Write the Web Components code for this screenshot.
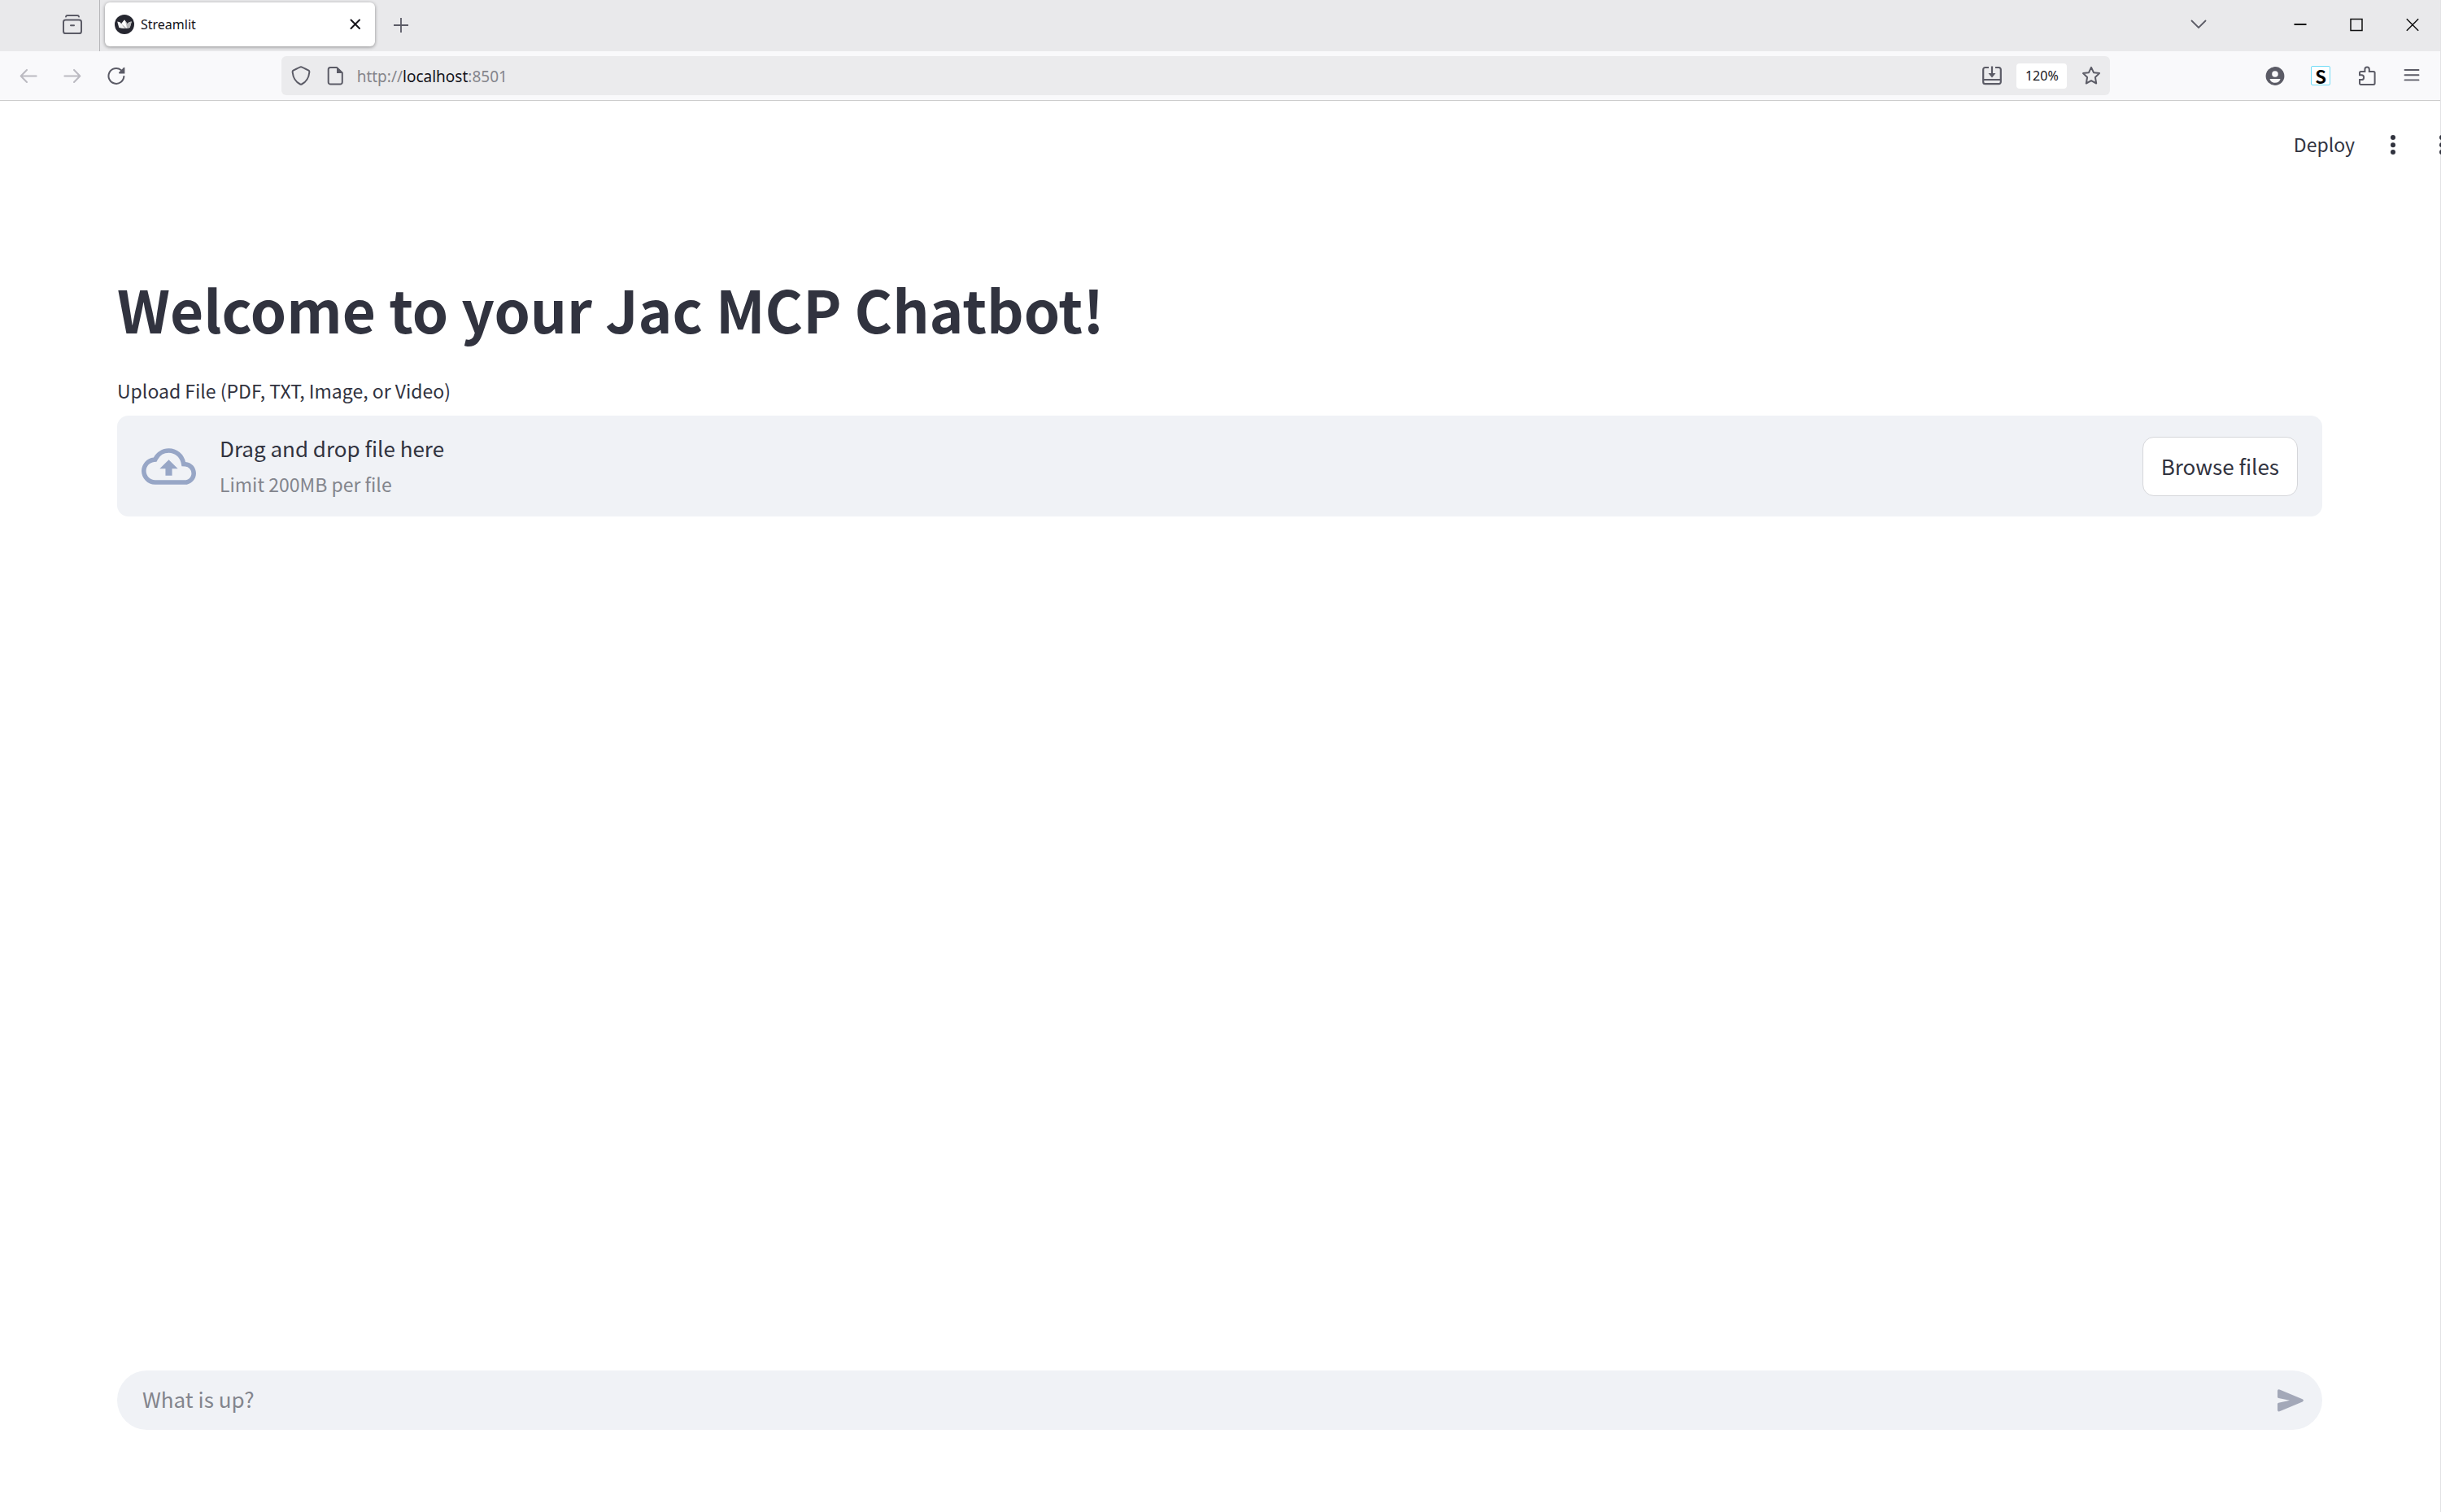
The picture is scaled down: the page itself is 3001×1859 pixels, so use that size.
<!DOCTYPE html>
<html lang="en">
<head>
<meta charset="utf-8">
<title>Streamlit</title>
<style>
html, body { margin: 0; height: 100%; background: #fff; }
body { --ui: "Noto Sans", "Open Sans", sans-serif; --app: "Noto Sans CJK JP", "Noto Sans", sans-serif; --ink: #31333f; --muted: #83858d; --panel: #f0f2f6; }
</style>
</head>
<body>
<browser-window>
  <tab-strip slot="chrome"><browser-tab>Streamlit</browser-tab></tab-strip>
  <nav-toolbar slot="chrome"></nav-toolbar>
  <app-header></app-header>
  <app-main>
    <app-title>Welcome to your Jac MCP Chatbot!</app-title>
    <file-uploader></file-uploader>
    <chat-input slot="bottom"></chat-input>
  </app-main>
</browser-window>
<script>
const define = (name, css, html) => customElements.define(name, class extends HTMLElement {
  constructor() {
    super();
    this.attachShadow({ mode: 'open' }).innerHTML = `<style>
      * { box-sizing: border-box; }
      button, a { font: inherit; color: inherit; background: none; border: 0; padding: 0; margin: 0; text-decoration: none; }
      svg { display: block; }
      ${css}</style>${html}`;
  }
});

const icons = {
  view: ['0 0 24 24', '<g fill="none" stroke="#5b5b66" stroke-width="2" stroke-linecap="round"><path d="M4 2.600Q4.300 1 5.800 1H18.200Q19.700 1 20 2.600"/><rect x="1" y="6.500" width="22" height="16.500" rx="2.600"/><path d="M10 13.200h4"/></g>'],
  cross: ['0 0 24 24', '<path d="M6.500 6.500l10.500 10.500M17 6.500l-10.500 10.500" stroke="#15141a" stroke-width="2" stroke-linecap="round"/>'],
  plus: ['0 0 24 24', '<path d="M12 4v18M3 13h18" stroke="#5b5b66" stroke-width="1.800"/>'],
  chevron: ['0 0 24 24', '<path d="M3.500 7.500l8.500 8.500L20.500 7.500" fill="none" stroke="#5b5b66" stroke-width="1.800" stroke-linecap="round"/>'],
  min: ['0 0 24 24', '<path d="M4.500 12h15" stroke="#111" stroke-width="2"/>'],
  max: ['0 0 24 24', '<rect x="5" y="5.500" width="14" height="14" fill="none" stroke="#111" stroke-width="1.500"/>'],
  close: ['0 0 24 24', '<path d="M4.800 5.300l14.400 14.400M19.200 5.300L4.800 19.700" stroke="#111" stroke-width="1.500"/>'],
  back: ['0 0 24 24', '<path d="M22.500 12.500H2.500M9.800 4.300L1.800 12.500l8 8.200" fill="none" stroke="#bbbac1" stroke-width="2.200" stroke-linecap="round" stroke-linejoin="round"/>'],
  forward: ['0 0 24 24', '<path d="M1.500 12.500h20M14.200 4.300l8 8.200-8 8.200" fill="none" stroke="#bbbac1" stroke-width="2.200" stroke-linecap="round" stroke-linejoin="round"/>'],
  reload: ['0 0 24 24', '<path d="M22.200 13A10.300 10.300 0 1 1 18.200 4.300" fill="none" stroke="#5b5b66" stroke-width="2.200" stroke-linecap="round"/><path d="M23.300 1v8.200h-7.400q-1-.400-.500-1.500L21.800 1.300q.900-.600 1.500-.300z" fill="#5b5b66"/>'],
  shield: ['0 0 24 24', '<path d="M12 1.200Q13 1.200 21.500 5.600Q22.600 6.200 22.300 8C21.600 15 18 20 13 22.500Q12 23 11 22.500C6 20 2.400 15 1.700 8Q1.400 6.200 2.500 5.600Q11 1.200 12 1.200z" fill="none" stroke="#5b5b66" stroke-width="2"/>'],
  page: ['0 0 24 24', '<path d="M6 2h8l6.800 6.500V20a2.600 2.600 0 0 1-2.600 2.600H6.300A2.600 2.600 0 0 1 3.700 20V4.400A2.400 2.400 0 0 1 6 2z" fill="none" stroke="#5b5b66" stroke-width="2" stroke-linejoin="round"/><path d="M14 1.500v7.500h7.500z" fill="#5b5b66"/>'],
  install: ['0 0 24 24', '<path d="M8 2H3.600A2.400 2.400 0 0 0 1.200 4.400V19.800a2.400 2.400 0 0 0 2.400 2.400H20.400a2.400 2.400 0 0 0 2.400-2.400V4.400A2.400 2.400 0 0 0 20.400 2H16M1.200 17h21.600M12 .500V11" fill="none" stroke="#5b5b66" stroke-width="2.200"/><path d="M7.500 9h9L12 14.500z" fill="#5b5b66"/>'],
  star: ['0 0 24 24', '<path d="M12 1.800l3 6.400 7 .900-5.100 4.900 1.300 7.500-6.200-3.400-6.200 3.400 1.300-7.500L2 9.100l7-.900z" fill="none" stroke="#5b5b66" stroke-width="2" stroke-linejoin="round"/>'],
  account: ['0 0 24 24', '<circle cx="12" cy="12.500" r="11.400" fill="#5b5b66"/><circle cx="12" cy="10" r="3.800" fill="#f9f9fb"/><path d="M5.500 16H18.500C18 19 15.500 20.800 12 20.800S6 19 5.500 16z" fill="#f9f9fb"/>'],
  puzzle: ['0 0 24 24', '<path d="M5 22.900H21a1.600 1.600 0 0 0 1.600-1.600V8.600A1.600 1.600 0 0 0 21 7H15.800V4.200a2.700 2.700 0 0 0-5.400 0V7H5.600A1.600 1.600 0 0 0 4 8.600v2.700H6.200a2.900 2.900 0 0 1 0 5.800H4V21.500a1.400 1.400 0 0 0 1 1.400z" fill="none" stroke="#5b5b66" stroke-width="2"/>'],
  menu: ['0 0 24 24', '<path d="M3.500 5h17M3.500 11.200h17M3.500 17.400h17" stroke="#5b5b66" stroke-width="1.900" stroke-linecap="round"/>'],
  crown: ['0 0 24 24', '<circle cx="12" cy="12" r="12" fill="#262730"/><path d="M3.200 8.500Q7 8.800 8.300 11.200L12 6.500l3.700 4.700Q17 8.800 20.800 8.500L18.700 16Q12 18 5.300 16z" fill="#f2f2f2"/><path d="M12 6.500l3.700 4.700Q17 8.800 20.800 8.500L18.700 16Q15 17 12 17L8.300 11.200z" fill="#b8b8ba"/><path d="M12 6.500L8.300 11.200 15 16.800Q14 10 12 6.500z" fill="#fff"/>'],
  kebab: ['0 0 24 24', '<g fill="#31333f"><circle cx="12" cy="3" r="3"/><circle cx="12" cy="12.200" r="3"/><circle cx="12" cy="21" r="3"/></g>'],
  cloud: ['0 0 24 24', '<path fill="#97a6c6" d="M19.350 10.040A7.490 7.490 0 0 0 12 4C9.110 4 6.600 5.640 5.350 8.040A5.994 5.994 0 0 0 0 14c0 3.310 2.690 6 6 6h13c2.760 0 5-2.240 5-5 0-2.640-2.050-4.780-4.650-4.960zM19 18H6c-2.210 0-4-1.790-4-4 0-2.050 1.530-3.760 3.560-3.970l1.070-.110.500-.950A5.469 5.469 0 0 1 12 6c2.620 0 4.880 1.860 5.390 4.430l.300 1.500 1.530.110A2.980 2.980 0 0 1 22 15c0 1.650-1.350 3-3 3zM8 13h2.550v3h2.900v-3H16l-4-4z"/>'],
  send: ['0 0 32 28', '<path fill="#a3a8b8" d="M0 2Q0-.300 2.600.400L30.700 12.200Q33.200 13.800 30.700 15.500L2.600 27.300Q0 28 0 25.500V18.200Q0 17 1.300 16.700L15 13.800 1.300 11Q0 10.700 0 9.500z"/>']
};
customElements.define('ui-icon', class extends HTMLElement {
  connectedCallback() {
    const [box, body] = icons[this.getAttribute('name')];
    const root = this.shadowRoot || this.attachShadow({ mode: 'open' });
    root.innerHTML = `<style>:host{display:block;flex:none;width:24px;height:24px}svg{display:block;width:100%;height:100%}</style><svg viewBox="${box}" aria-hidden="true">${body}</svg>`;
  }
});

define('browser-window', `
  :host { display: flex; flex-direction: column; box-sizing: border-box; min-height: 100vh; border-right: 1px solid #e2e2e4; }
`, `<slot name="chrome"></slot><slot></slot>`);

define('tab-strip', `
  :host { display: flex; align-items: center; box-sizing: border-box; height: 63px; background: #e9e9eb; padding: 0 0 3px 65px; font: 16px var(--ui); }
  button { width: 48px; height: 48px; display: grid; place-items: center; }
  .divider { width: 1px; align-self: stretch; background: #b5b5b9; margin: 0 6px -3px 9px; }
  .new { margin-left: 8px; }
  .list { margin: 0 66px 0 auto; }
  .win { width: 69px; height: 60px; }
`, `<button aria-label="View recent browsing"><ui-icon name="view"></ui-icon></button>
  <span class="divider"></span><slot></slot>
  <button class="new" aria-label="New tab"><ui-icon name="plus"></ui-icon></button>
  <button class="list" aria-label="List all tabs"><ui-icon name="chevron"></ui-icon></button>
  <button class="win" aria-label="Minimize"><ui-icon name="min"></ui-icon></button>
  <button class="win" aria-label="Maximize"><ui-icon name="max"></ui-icon></button>
  <button class="win" aria-label="Close"><ui-icon name="close"></ui-icon></button>`);

define('browser-tab', `
  :host { display: flex; align-items: center; gap: 8px; box-sizing: border-box; width: 332px; height: 54px; padding: 0 6px 0 12px; background: #fff; border-radius: 6px; box-shadow: 0 1px 4px rgba(0,0,0,.4); color: #15141a; }
  .name { flex: 1; line-height: 24px; }
  button { width: 36px; height: 36px; display: grid; place-items: center; }
`, `<ui-icon name="crown"></ui-icon><span class="name"><slot></slot></span>
  <button aria-label="Close tab"><ui-icon name="cross"></ui-icon></button>`);

define('nav-toolbar', `
  :host { display: flex; align-items: center; box-sizing: border-box; height: 61px; padding: 0 11px; background: #f9f9fb; border-bottom: 1px solid #ccc; }
  .group { display: flex; gap: 6px; }
  .tools { gap: 8px; }
  .space { flex: 179; }
  button { width: 48px; height: 48px; display: grid; place-items: center; }
  address-bar { flex: 2248; }
  .s { width: 24px; height: 24px; border: 1px solid #6fdcf7; border-radius: 2px; background: #fff; color: #000; font: bold 22px/22px var(--app); text-align: center; }
  .nav ui-icon { width: 22px; height: 22px; }
`, `<div class="group nav">
    <button aria-label="Back"><ui-icon name="back"></ui-icon></button>
    <button aria-label="Forward"><ui-icon name="forward"></ui-icon></button>
    <button aria-label="Reload"><ui-icon name="reload"></ui-icon></button>
  </div>
  <span class="space"></span><address-bar></address-bar><span class="space"></span>
  <div class="group tools">
    <button aria-label="Account"><ui-icon name="account"></ui-icon></button>
    <button aria-label="Extension"><span class="s">S</span></button>
    <button aria-label="Extensions"><ui-icon name="puzzle"></ui-icon></button>
    <button aria-label="Menu"><ui-icon name="menu"></ui-icon></button>
  </div>`);

define('address-bar', `
  :host { display: flex; align-items: center; box-sizing: border-box; height: 48px; padding: 0 2px 0 3px; border-radius: 6px; background: #ebebed; color: #15141a; font: 19px/30px var(--ui); }
  button { width: 42px; height: 42px; display: grid; place-items: center; }
  .url { flex: 1; padding: 2px 0 0 6px; color: #85858b; }
  b { font-weight: 400; color: #15141a; }
  .zoom { width: 62px; height: 31px; margin: 0 9px; background: #fff; border-radius: 4px; font-size: 16px; }
`, `<button aria-label="Tracking protection"><ui-icon name="shield"></ui-icon></button>
  <button aria-label="Site information"><ui-icon name="page"></ui-icon></button>
  <span class="url">http://<b>localhost</b>:8501</span>
  <button aria-label="Install"><ui-icon name="install"></ui-icon></button>
  <button class="zoom">120%</button>
  <button aria-label="Bookmark"><ui-icon name="star"></ui-icon></button>`);

define('app-header', `
  :host { display: flex; justify-content: flex-end; align-items: center; height: 108px; margin-right: -1px; overflow: hidden; font: 23px/40px var(--app); color: var(--ink); }
  .menu { flex: none; width: 60px; height: 60px; display: grid; place-items: center; }
  .deploy { margin-right: 17px; padding-bottom: 2px; }
  .edge { margin-right: -31px; }
`, `<button class="deploy">Deploy</button>
  <button class="menu" aria-label="Main menu"><ui-icon name="kebab"></ui-icon></button>
  <button class="menu edge" aria-label="More"><ui-icon name="kebab"></ui-icon></button>`);

define('app-main', `
  :host { display: flex; flex: 1; flex-direction: column; padding: 104px 145px 101px 144px; color: var(--ink); font-family: var(--app); }
  main { flex: 1; display: flex; flex-direction: column; gap: 38px; }
`, `<main><slot></slot></main><slot name="bottom"></slot>`);

define('app-title', `
  :host { display: block; }
  h1 { margin: 0; font: bold 71px/86px var(--app); }
`, `<h1><slot></slot></h1>`);

define('file-uploader', `
  :host { display: block; }
  label { display: block; font-size: 23px; line-height: 40px; margin-bottom: 11px; }
  input { display: none; }
  .zone { display: flex; align-items: center; height: 124px; padding: 0 30px; border-radius: 14px; background: var(--panel); }
  .zone ui-icon { width: 67px; height: 67px; margin-right: 29px; }
  .text { flex: 1; display: flex; flex-direction: column; line-height: 44px; font-size: 26px; }
  small { font-size: 23px; color: var(--muted); }
  button { height: 73px; padding: 0 22px 2px; border: 1px solid #d5d6da; border-radius: 14px; background: #fff; font-size: 26px; }
`, `<label for="file">Upload File (PDF, TXT, Image, or Video)</label><input id="file" type="file">
  <section class="zone"><ui-icon name="cloud"></ui-icon>
    <div class="text"><span>Drag and drop file here</span><small>Limit 200MB per file</small></div>
    <button>Browse files</button></section>`);

define('chat-input', `
  :host { display: flex; align-items: center; height: 73px; padding: 0 11px 0 31px; border-radius: 37px; background: var(--panel); }
  input { flex: 1; min-width: 0; height: 60px; padding: 0 0 4px; border: 0; outline: 0; background: none; font: 26px/44px var(--app); color: var(--ink); }
  input::placeholder { color: var(--muted); opacity: 1; }
  button { width: 56px; height: 56px; display: grid; place-items: center; }
  ui-icon { width: 32px; height: 28px; }
`, `<input type="text" placeholder="What is up?" aria-label="Message"><button aria-label="Send"><ui-icon name="send"></ui-icon></button>`);
</script>
</body>
</html>
